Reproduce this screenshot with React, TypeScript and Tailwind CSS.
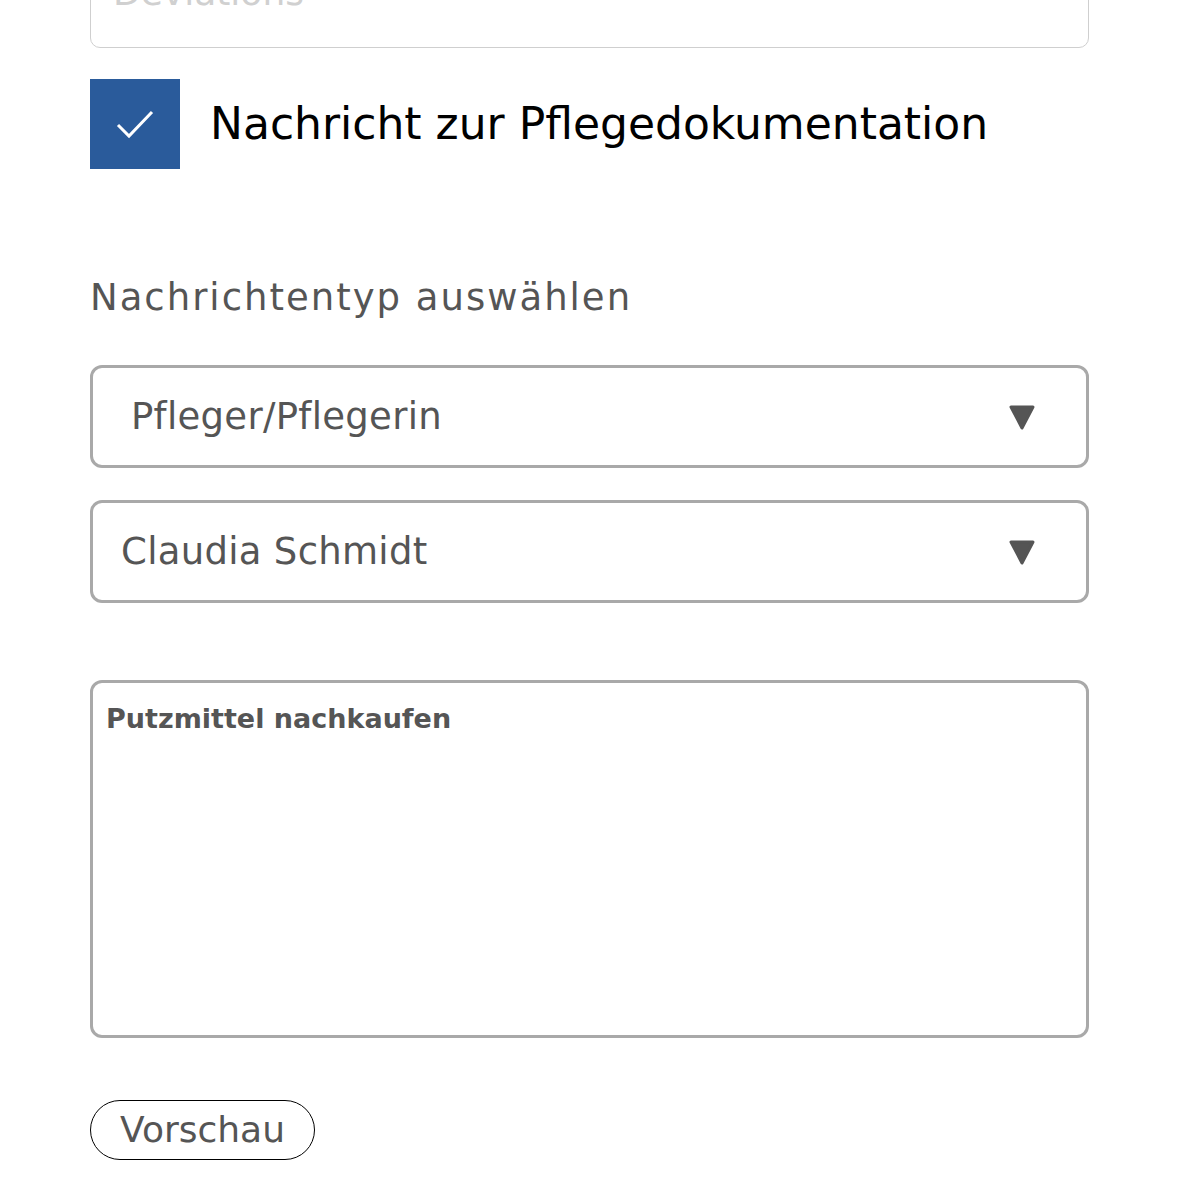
import React from "react"

const font = { fontFamily: '"DejaVu Sans", "Noto Sans", sans-serif' }

function Caret() {
  return (
    <svg width="28" height="28" viewBox="0 0 28 28" className="shrink-0">
      <polygon points="3,4 25,4 14,25" fill="#555" stroke="#555" strokeWidth="3" strokeLinejoin="round" />
    </svg>
  )
}

function Select({ value, pad }: { value: string; pad: string }) {
  return (
    <div className={`flex h-[103px] items-center justify-between rounded-[12px] border-[3px] border-[#a9a9a9] pr-[50px] ${pad}`}>
      <span className="text-[37px] tracking-[0.3px] text-[#555]">{value}</span>
      <Caret />
    </div>
  )
}

export default function App() {
  return (
    <div className="min-h-[1178px] overflow-hidden bg-white pl-[90px] pr-[88px]" style={font}>
      {/* cut-off field above */}
      <div className="-mt-[62px] h-[110px] rounded-[10px] border border-[#cfcfcf] pl-[22px] pt-[36px]">
        <span className="text-[36px] leading-none text-[#d0d0d0]">Deviations</span>
      </div>

      {/* checkbox */}
      <div className="mt-[31px] flex items-center gap-[30px]">
        <div className="flex h-[90px] w-[90px] shrink-0 items-center justify-center bg-[#2a5b9b]">
          <svg width="42" height="42" viewBox="0 0 42 42">
            <path d="M4 22 L15 33 L38 9" fill="none" stroke="white" strokeWidth="3" />
          </svg>
        </div>
        <span className="whitespace-nowrap text-[44px] text-black">Nachricht zur Pflegedokumentation</span>
      </div>

      <div className="mt-[104px] flex h-[50px] items-center text-[37px] tracking-[2px] text-[#555]">
        Nachrichtentyp auswählen
      </div>

      <div className="mt-[42px] flex flex-col gap-[32px]">
        <Select value="Pfleger/Pflegerin" pad="pl-[38px]" />
        <Select value="Claudia Schmidt" pad="pl-[28px]" />
      </div>

      <div className="mt-[77px] h-[358px] rounded-[12px] border-[3px] border-[#a9a9a9] px-[13px] pt-[16px]">
        <p className="text-[27px] font-bold text-[#555]">Putzmittel nachkaufen</p>
      </div>

      <button className="mt-[62px] flex h-[60px] w-[225px] items-center justify-center rounded-full border-[1.5px] border-black text-[36px] text-[#555]">
        Vorschau
      </button>
    </div>
  )
}
